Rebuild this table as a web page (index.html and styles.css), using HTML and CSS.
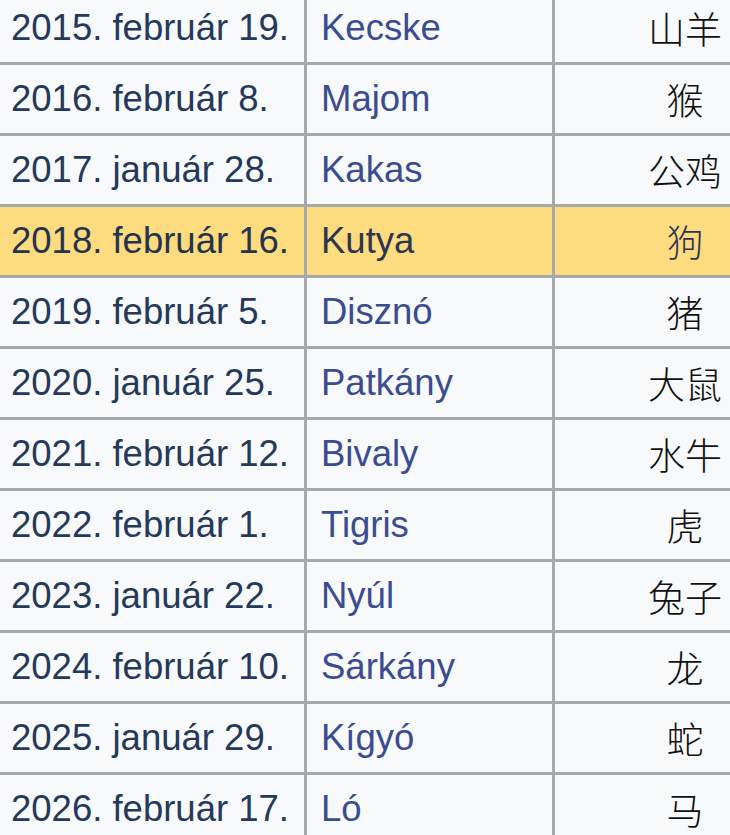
FILE: index.html
```html
<!DOCTYPE html>
<html lang="hu">
<head>
<meta charset="utf-8">
<link rel="stylesheet" href="styles.css">
</head>
<body>
<table class="zodiac">
<tbody>
<tr><td class="date">2015. február 19.</td><td class="name">Kecske</td><td class="cjk">山羊</td></tr>
<tr><td class="date">2016. február 8.</td><td class="name">Majom</td><td class="cjk">猴</td></tr>
<tr><td class="date">2017. január 28.</td><td class="name">Kakas</td><td class="cjk">公鸡</td></tr>
<tr class="current"><td class="date">2018. február 16.</td><td class="name">Kutya</td><td class="cjk">狗</td></tr>
<tr><td class="date">2019. február 5.</td><td class="name">Disznó</td><td class="cjk">猪</td></tr>
<tr><td class="date">2020. január 25.</td><td class="name">Patkány</td><td class="cjk">大鼠</td></tr>
<tr><td class="date">2021. február 12.</td><td class="name">Bivaly</td><td class="cjk">水牛</td></tr>
<tr><td class="date">2022. február 1.</td><td class="name">Tigris</td><td class="cjk">虎</td></tr>
<tr><td class="date">2023. január 22.</td><td class="name">Nyúl</td><td class="cjk">兔子</td></tr>
<tr><td class="date">2024. február 10.</td><td class="name">Sárkány</td><td class="cjk">龙</td></tr>
<tr><td class="date">2025. január 29.</td><td class="name">Kígyó</td><td class="cjk">蛇</td></tr>
<tr><td class="date">2026. február 17.</td><td class="name">Ló</td><td class="cjk">马</td></tr>
</tbody>
</table>
</body>
</html>
```
FILE: styles.css
```css
html, body {
  margin: 0;
  padding: 0;
  background: #f8f9fa;
  overflow: hidden;
}

.zodiac {
  border-collapse: collapse;
  margin: -9px 0 0 -3px;
  width: 821px;
  table-layout: fixed;
  font-family: "Liberation Sans", Arial, sans-serif;
  font-size: 36.5px;
  background: #f8f9fa;
}

.zodiac td {
  border: 3px solid #a5a9ae;
  padding: 14px 8px 14px 14px;
  line-height: 40px;
  height: 40px;
  white-space: nowrap;
  overflow: hidden;
}

.zodiac td.date {
  width: 285px;
  padding-left: 11px;
  color: #24395c;
}

.zodiac td.name {
  width: 223px;
  color: #3a4c92;
}

.zodiac td.cjk {
  text-align: center;
  padding-left: 10px;
  padding-right: 10px;
  color: #111;
  font-family: "Noto Sans CJK SC", "Noto Sans CJK JP", sans-serif;
  font-weight: 300;
  font-size: 37px;
}

.zodiac tr.current td {
  background: #fddc80;
  color: #2e3550;
}

.zodiac tr.current td.date {
  color: #26334d;
}
```
